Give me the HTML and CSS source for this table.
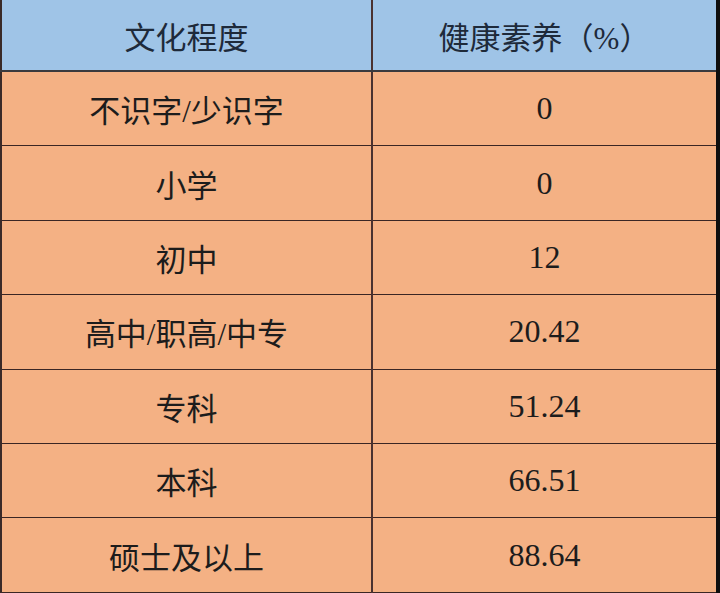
FILE: index.html
```html
<!DOCTYPE html>
<html lang="zh">
<head>
<meta charset="utf-8">
<link rel="stylesheet" href="styles.css">
</head>
<body>
<table class="data">
  <thead>
    <tr class="head"><th>文化程度</th><th>健康素养（%）</th></tr>
  </thead>
  <tbody>
    <tr><td>不识字/少识字</td><td>0</td></tr>
    <tr><td>小学</td><td>0</td></tr>
    <tr><td>初中</td><td>12</td></tr>
    <tr><td>高中/职高/中专</td><td>20.42</td></tr>
    <tr><td>专科</td><td>51.24</td></tr>
    <tr><td>本科</td><td>66.51</td></tr>
    <tr><td>硕士及以上</td><td>88.64</td></tr>
  </tbody>
</table>
</body>
</html>
```
FILE: styles.css
```css
html, body {
  margin: 0;
  padding: 0;
  background: #0e0e0e;
  width: 720px;
  height: 593px;
  overflow: hidden;
}
.data {
  width: 716px;
  border-collapse: collapse;
  table-layout: fixed;
  font-family: "Liberation Serif", "Noto Sans CJK SC", serif;
  font-size: 31px;
  color: #1c1c1c;
  border-left: 2px solid #3a2a28;
}
.data th, .data td {
  text-align: center;
  vertical-align: middle;
  padding: 0;
  font-weight: normal;
  border-bottom: 1px solid #3a2624;
}
.data td:last-child {
  font-size: 32px;
}
.data th:first-child, .data td:first-child {
  width: 369px;
  border-right: 2px solid #4a3230;
}
.head th {
  height: 70px;
  background: #9fc4e7;
  color: #1e2a3a;
  border-bottom: 2px solid #3a3a3e;
}
.data td {
  height: 73.4px;
  background: #f4b184;
}
```
